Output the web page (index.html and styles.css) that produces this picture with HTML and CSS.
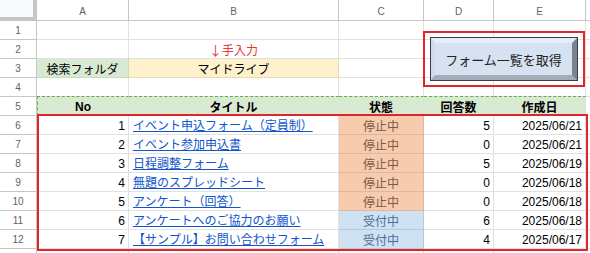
FILE: index.html
```html
<!DOCTYPE html>
<html lang="ja">
<head>
<meta charset="utf-8">
<title>フォーム一覧</title>
<link rel="stylesheet" href="styles.css">
</head>
<body>
<div class="wrap">
  <div class="sheet">
    <div class="corner"></div>
    <div class="colh">A</div><div class="colh">B</div><div class="colh">C</div><div class="colh">D</div><div class="colh">E</div><div class="colh last"></div>

    <div class="rowh">1</div><div class="c"></div><div class="c"></div><div class="c"></div><div class="c"></div><div class="c"></div><div class="c last"></div>

    <div class="rowh">2</div><div class="c"></div><div class="c center note"><span class="arrow">↓</span>手入力</div><div class="c"></div><div class="c"></div><div class="c"></div><div class="c last"></div>

    <div class="rowh">3</div><div class="c center label">検索フォルダ</div><div class="c center input">マイドライブ</div><div class="c"></div><div class="c"></div><div class="c"></div><div class="c last"></div>

    <div class="rowh">4</div><div class="c"></div><div class="c"></div><div class="c"></div><div class="c"></div><div class="c"></div><div class="c last"></div>

    <div class="rowh">5</div><div class="c head first">No</div><div class="c head">タイトル</div><div class="c head">状態</div><div class="c head">回答数</div><div class="c head">作成日</div><div class="c last"></div>

    <div class="rowh">6</div><div class="c num">1</div><div class="c"><a class="link">イベント申込フォーム（定員制）</a></div><div class="c center stop">停止中</div><div class="c num">5</div><div class="c num">2025/06/21</div><div class="c last"></div>

    <div class="rowh">7</div><div class="c num">2</div><div class="c"><a class="link">イベント参加申込書</a></div><div class="c center stop">停止中</div><div class="c num">0</div><div class="c num">2025/06/21</div><div class="c last"></div>

    <div class="rowh">8</div><div class="c num">3</div><div class="c"><a class="link">日程調整フォーム</a></div><div class="c center stop">停止中</div><div class="c num">5</div><div class="c num">2025/06/19</div><div class="c last"></div>

    <div class="rowh">9</div><div class="c num">4</div><div class="c"><a class="link">無題のスプレッドシート</a></div><div class="c center stop">停止中</div><div class="c num">0</div><div class="c num">2025/06/18</div><div class="c last"></div>

    <div class="rowh">10</div><div class="c num">5</div><div class="c"><a class="link">アンケート（回答）</a></div><div class="c center stop">停止中</div><div class="c num">0</div><div class="c num">2025/06/18</div><div class="c last"></div>

    <div class="rowh">11</div><div class="c num">6</div><div class="c"><a class="link">アンケートへのご協力のお願い</a></div><div class="c center open">受付中</div><div class="c num">6</div><div class="c num">2025/06/18</div><div class="c last"></div>

    <div class="rowh">12</div><div class="c num">7</div><div class="c"><a class="link">【サンプル】お問い合わせフォーム</a></div><div class="c center open">受付中</div><div class="c num">4</div><div class="c num">2025/06/17</div><div class="c last"></div>

    <div class="rowh"></div><div class="c"></div><div class="c"></div><div class="c"></div><div class="c"></div><div class="c"></div><div class="c last"></div>
  </div>

  <div class="btn-frame"></div>
  <div class="btn"><span>フォーム一覧を取得</span></div>
  <div class="table-frame"></div>
</div>
</body>
</html>
```

FILE: styles.css
```css
html, body {
  margin: 0;
  padding: 0;
  background: #ffffff;
}

body {
  width: 590px;
  height: 253px;
  overflow: hidden;
  font-family: "Liberation Sans", "Noto Sans CJK JP", sans-serif;
  font-size: 12px;
  color: #000000;
}

.wrap {
  position: relative;
  width: 590px;
  height: 253px;
  overflow: hidden;
}

.sheet {
  display: grid;
  grid-template-columns: 37px 92px 210px 85px 70px 92px 20px;
  grid-template-rows: 21px repeat(13, 19px);
}

.sheet > div {
  box-sizing: border-box;
  display: flex;
  align-items: center;
  white-space: nowrap;
  overflow: hidden;
}

.corner {
  background: #f8f9fa;
  border-right: 4px solid #c4c7c5;
  border-bottom: 4px solid #c4c7c5;
}

.colh {
  justify-content: center;
  font-size: 10px;
  color: #5f6368;
  border-right: 1px solid #c4c7c5;
  border-bottom: 1px solid #c4c7c5;
  padding-top: 2px;
}

.rowh {
  justify-content: center;
  font-size: 10px;
  color: #5f6368;
  border-right: 1px solid #c4c7c5;
  border-bottom: 1px solid #c4c7c5;
  padding-top: 1px;
}

.c {
  border-right: 1px solid #e1e1e1;
  border-bottom: 1px solid #e1e1e1;
  padding: 1px 4px 0 4px;
}

.c.last {
  border-right: none;
}

.center {
  justify-content: center;
}

.num {
  justify-content: flex-end;
  padding-right: 3px;
}

.note {
  color: #e53935;
}

.arrow {
  font-family: "Noto Sans CJK JP", sans-serif;
  font-size: 13px;
  line-height: 1;
}

.label {
  background: #d9ead3;
  border-right-color: #c9d9c2;
  border-bottom-color: #c9d9c2;
}

.input {
  background: #fdf2cc;
  border-right-color: #eadcaa;
  border-bottom-color: #eadcaa;
}

.head {
  justify-content: center;
  font-weight: bold;
  background: #d9ead3;
  border-top: 1px dashed #6aa84f;
  margin-top: -1px;
}

.head.first {
  border-left: 1px dashed #6aa84f;
}

.link {
  color: #1155cc;
  text-decoration: underline;
  text-underline-offset: 1px;
  line-height: 14px;
}

.stop {
  background: #f6cbae;
  color: #7d5a45;
  border-right-color: #e0b79a;
  border-bottom-color: #e0b79a;
}

.open {
  background: #cfe2f3;
  color: #4a6d94;
  border-right-color: #b3c9dc;
  border-bottom-color: #b3c9dc;
}

.btn-frame {
  position: absolute;
  left: 423px;
  top: 31px;
  width: 162px;
  height: 56px;
  box-sizing: border-box;
  border: 2px solid #e0262b;
}

.btn {
  position: absolute;
  left: 430px;
  top: 37px;
  width: 148px;
  height: 44px;
  box-sizing: border-box;
  background: #d6e1f1;
  border-style: solid;
  border-width: 6px 6px 6px 5px;
  border-top-color: #e6edf6;
  border-left-color: #d0dae8;
  border-right-color: #7a838e;
  border-bottom-color: #a3acb7;
  outline: 1px solid #3a3f45;
  outline-offset: -1px;
  display: flex;
  align-items: center;
  justify-content: center;
  font-size: 13px;
  color: #222222;
}

.table-frame {
  position: absolute;
  left: 37px;
  top: 114px;
  width: 551px;
  height: 137px;
  box-sizing: border-box;
  border: 2px solid #e0262b;
}
```
